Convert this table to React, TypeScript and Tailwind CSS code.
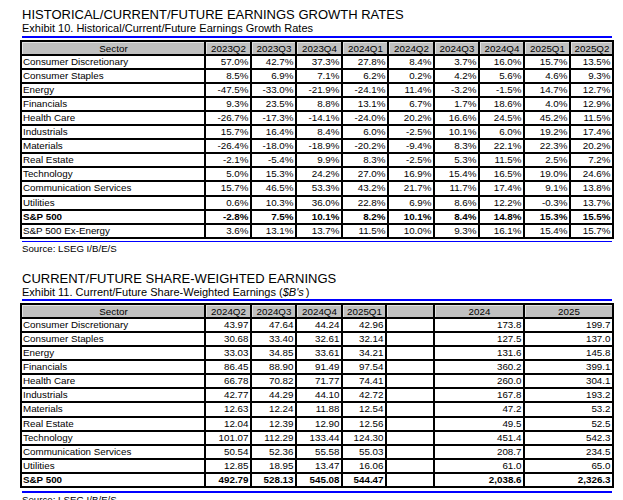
const growthCols = ["2023Q2", "2023Q3", "2023Q4", "2024Q1", "2024Q2", "2024Q3", "2024Q4", "2025Q1", "2025Q2"];

const growthRows: { name: string; vals: string[]; bold?: boolean }[] = [
  { name: "Consumer Discretionary", vals: ["57.0%", "42.7%", "37.3%", "27.8%", "8.4%", "3.7%", "16.0%", "15.7%", "13.5%"] },
  { name: "Consumer Staples", vals: ["8.5%", "6.9%", "7.1%", "6.2%", "0.2%", "4.2%", "5.6%", "4.6%", "9.3%"] },
  { name: "Energy", vals: ["-47.5%", "-33.0%", "-21.9%", "-24.1%", "11.4%", "-3.2%", "-1.5%", "14.7%", "12.7%"] },
  { name: "Financials", vals: ["9.3%", "23.5%", "8.8%", "13.1%", "6.7%", "1.7%", "18.6%", "4.0%", "12.9%"] },
  { name: "Health Care", vals: ["-26.7%", "-17.3%", "-14.1%", "-24.0%", "20.2%", "16.6%", "24.5%", "45.2%", "11.5%"] },
  { name: "Industrials", vals: ["15.7%", "16.4%", "8.4%", "6.0%", "-2.5%", "10.1%", "6.0%", "19.2%", "17.4%"] },
  { name: "Materials", vals: ["-26.4%", "-18.0%", "-18.9%", "-20.2%", "-9.4%", "8.3%", "22.1%", "22.3%", "20.2%"] },
  { name: "Real Estate", vals: ["-2.1%", "-5.4%", "9.9%", "8.3%", "-2.5%", "5.3%", "11.5%", "2.5%", "7.2%"] },
  { name: "Technology", vals: ["5.0%", "15.3%", "24.2%", "27.0%", "16.9%", "15.4%", "16.5%", "19.0%", "24.6%"] },
  { name: "Communication Services", vals: ["15.7%", "46.5%", "53.3%", "43.2%", "21.7%", "11.7%", "17.4%", "9.1%", "13.8%"] },
  { name: "Utilities", vals: ["0.6%", "10.3%", "36.0%", "22.8%", "6.9%", "8.6%", "12.2%", "-0.3%", "13.7%"] },
  { name: "S&P 500", vals: ["-2.8%", "7.5%", "10.1%", "8.2%", "10.1%", "8.4%", "14.8%", "15.3%", "15.5%"], bold: true },
  { name: "S&P 500 Ex-Energy", vals: ["3.6%", "13.1%", "13.7%", "11.5%", "10.0%", "9.3%", "16.1%", "15.4%", "15.7%"] },
];

const earnCols = ["2024Q2", "2024Q3", "2024Q4", "2025Q1", "", "2024", "2025"];

const earnRows: { name: string; vals: string[]; bold?: boolean }[] = [
  { name: "Consumer Discretionary", vals: ["43.97", "47.64", "44.24", "42.96", "", "173.8", "199.7"] },
  { name: "Consumer Staples", vals: ["30.68", "33.40", "32.61", "32.14", "", "127.5", "137.0"] },
  { name: "Energy", vals: ["33.03", "34.85", "33.61", "34.21", "", "131.6", "145.8"] },
  { name: "Financials", vals: ["86.45", "88.90", "91.49", "97.54", "", "360.2", "399.1"] },
  { name: "Health Care", vals: ["66.78", "70.82", "71.77", "74.41", "", "260.0", "304.1"] },
  { name: "Industrials", vals: ["42.77", "44.29", "44.10", "42.72", "", "167.8", "193.2"] },
  { name: "Materials", vals: ["12.63", "12.24", "11.88", "12.54", "", "47.2", "53.2"] },
  { name: "Real Estate", vals: ["12.04", "12.39", "12.90", "12.56", "", "49.5", "52.5"] },
  { name: "Technology", vals: ["101.07", "112.29", "133.44", "124.30", "", "451.4", "542.3"] },
  { name: "Communication Services", vals: ["50.54", "52.36", "55.58", "55.03", "", "208.7", "234.5"] },
  { name: "Utilities", vals: ["12.85", "18.95", "13.47", "16.06", "", "61.0", "65.0"] },
  { name: "S&P 500", vals: ["492.79", "528.13", "545.08", "544.47", "", "2,038.6", "2,326.3"], bold: true },
];

// 헤더 셀 (회색 배경 + 살짝 밝은 테두리)
function HeadCell({ label }: { label: string }) {
  return (
    <div className="bg-[#c0c0c0] border-l border-t border-[#e2e2e2] text-center whitespace-nowrap overflow-hidden">
      {label}
    </div>
  );
}

function BodyRow({ name, vals, bold }: { name: string; vals: string[]; bold?: boolean }) {
  return (
    <>
      <div className={`bg-white pl-[1px] whitespace-nowrap overflow-hidden ${bold ? "font-bold" : ""}`}>{name}</div>
      {vals.map((v, i) => (
        <div
          key={i}
          className={`bg-white pr-[1.5px] text-right whitespace-nowrap overflow-hidden ${bold ? "font-bold" : ""}`}
        >
          {v}
        </div>
      ))}
    </>
  );
}

function BlueRule() {
  return <div className="mx-[2px] h-[1.5px] bg-[#0000ff]" />;
}

export default function App() {
  return (
    <div className="w-[623px] h-[500px] overflow-hidden bg-white text-black font-['Liberation_Sans',Arial,sans-serif]">
      <div className="ml-[20px] w-[594px] pt-[7px]">
        {/* 첫번째 표 */}
        <div className="pl-[2px] text-[13px] leading-[15px] whitespace-nowrap">
          HISTORICAL/CURRENT/FUTURE EARNINGS GROWTH RATES
        </div>
        <div className="pl-[2px] text-[11px] leading-[13px] whitespace-nowrap">
          Exhibit 10. Historical/Current/Future Earnings Growth Rates
        </div>
        <div className="mt-[1px]">
          <BlueRule />
        </div>
        <div className="mt-[2px] grid grid-cols-[182px_44px_43px_44px_44px_44px_43px_43px_44px_41px] auto-rows-[12.1px] gap-[2px] bg-black border-2 border-black text-[9.8px] leading-[12px]">
          <HeadCell label="Sector" />
          {growthCols.map((c) => (
            <HeadCell key={c} label={c} />
          ))}
          {growthRows.map((r) => (
            <BodyRow key={r.name} {...r} />
          ))}
        </div>
        <div className="mt-[2px]">
          <BlueRule />
        </div>
        <div className="pl-[2px] mt-[1px] text-[9.7px] leading-[12px]">Source: LSEG I/B/E/S</div>

        {/* 두번째 표 */}
        <div className="mt-[16px] pl-[2px] text-[13px] leading-[15px] whitespace-nowrap">
          CURRENT/FUTURE SHARE-WEIGHTED EARNINGS
        </div>
        <div className="pl-[2px] text-[11px] leading-[13px] whitespace-nowrap">
          Exhibit 11. Current/Future Share-Weighted Earnings (<i>$B's</i>
          <span className="ml-[2px]">)</span>
        </div>
        <div>
          <BlueRule />
        </div>
        <div className="mt-[2px] grid grid-cols-[182px_44px_43px_44px_42px_46px_88px_87px] auto-rows-[12.1px] gap-[2px] bg-black border-2 border-black text-[9.8px] leading-[12px]">
          <HeadCell label="Sector" />
          {earnCols.map((c, i) => (
            <HeadCell key={i} label={c} />
          ))}
          {earnRows.map((r) => (
            <BodyRow key={r.name} {...r} />
          ))}
        </div>
        <div className="mt-[3px]">
          <BlueRule />
        </div>
        <div className="pl-[2px] mt-[1px] text-[9.7px] leading-[12px]">Source: LSEG I/B/E/S</div>
      </div>
    </div>
  );
}
